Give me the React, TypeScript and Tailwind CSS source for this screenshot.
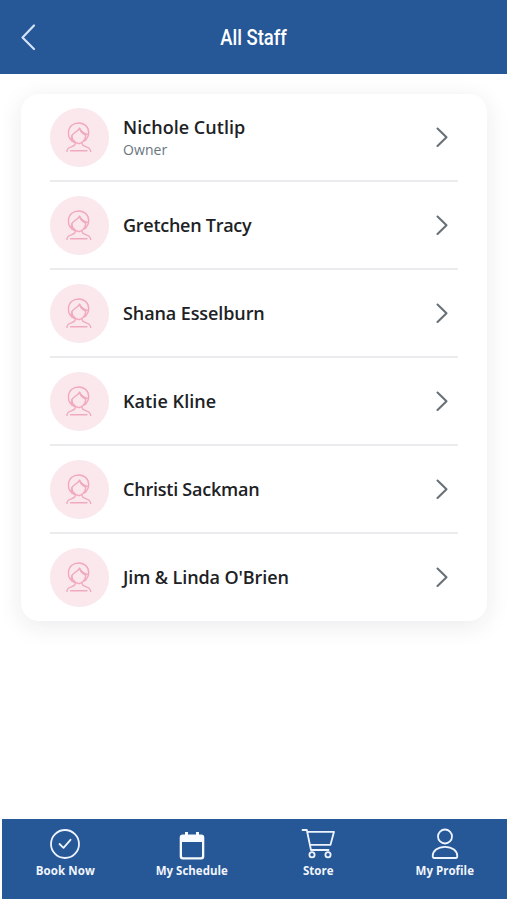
type Staff = { name: string; role?: string; tracking: string };

const staff: Staff[] = [
  { name: "Nichole Cutlip", role: "Owner", tracking: "tracking-[0.04px]" },
  { name: "Gretchen Tracy", tracking: "tracking-[-0.27px]" },
  { name: "Shana Esselburn", tracking: "tracking-[-0.1px]" },
  { name: "Katie Kline", tracking: "tracking-[0.08px]" },
  { name: "Christi Sackman", tracking: "tracking-[-0.23px]" },
  { name: "Jim & Linda O'Brien", tracking: "tracking-[-0.11px]" },
];

function Avatar() {
  return (
    <div className="flex h-[59px] w-[59px] shrink-0 items-center justify-center rounded-full bg-[#fae8ed] pr-px">
      <svg width="26" height="30" viewBox="0 0 26 30" fill="none" stroke="#f0a9be" strokeWidth="1.400" strokeLinecap="round" strokeLinejoin="round">
        <path d="M8.500 20.500C4 18.500 2.200 15 2.400 10.500 2.700 4.500 7 1 12.700 1c6 0 10 4 10 9.800 0 3.400-1.500 6-4.200 8.200" />
        <path d="M13.500 6.300C11.500 9.800 7 10.800 5.800 13.800c0 3 1.300 4.700 3.200 6l2.800 1.700h2l2.800-1.700c1.900-1.400 3-3.400 3.200-6.400C17 12 14.500 9.800 13.500 6.300Z" />
        <path d="M13.500 6.300c1.800 3.400 4.800 5.300 8.600 6.200M5.800 13.800c-.8 1.700-.6 3.500.2 5" />
        <path d="M9.500 21.300 8.800 23C7 24.600 4.500 24.800 2.700 26 1.500 26.900 1 28 .8 29.400M16 21.300l.7 1.700c1.800 1.600 4.300 1.800 6.100 3 1.200.9 1.700 2 1.900 3.400M4.500 28.700h16.500" />
      </svg>
    </div>
  );
}

function Chevron({ left = false }: { left?: boolean }) {
  return left ? (
    <svg width="16" height="28" viewBox="0 0 16 28" fill="none" stroke="#d3e2f8" strokeWidth="2.200" strokeLinecap="round" strokeLinejoin="round">
      <path d="M14 2.500 2.500 14.500 14 26" />
    </svg>
  ) : (
    <svg width="14" height="22" viewBox="0 0 14 22" fill="none" stroke="#687177" strokeWidth="2.100" strokeLinecap="round" strokeLinejoin="round">
      <path d="m2.500 2.500 9 8.700-9 8.800" />
    </svg>
  );
}

function BookIcon() {
  return (
    <svg width="32" height="32" viewBox="0 0 32 32" fill="none" stroke="#eef4ff" strokeWidth="1.800" strokeLinecap="round" strokeLinejoin="round">
      <circle cx="16" cy="16" r="14" />
      <path d="m10.500 16 4 3.800 7-8" />
    </svg>
  );
}

function ScheduleIcon() {
  return (
    <svg width="32" height="32" viewBox="0 0 32 32" fill="#f7faff">
      <path fillRule="evenodd" d="M9 4h3v2.500h8V4h3v2.500h2.300a3 3 0 0 1 3 3v19a3 3 0 0 1-3 3H6.700a3 3 0 0 1-3-3v-19a3 3 0 0 1 3-3H9V4ZM6 14v13.700c0 1 .6 1.600 1.600 1.600h16.800c1 0 1.600-.6 1.600-1.600V14H6Z" />
    </svg>
  );
}

function StoreIcon() {
  return (
    <svg width="36" height="32" viewBox="0 0 36 32" fill="none" stroke="#eef4ff" strokeWidth="1.800" strokeLinecap="round" strokeLinejoin="round">
      <path d="M2.500 2h4.300l4.200 20h17.500M7.500 3.800H34L30.500 16.800H10" />
      <circle cx="12" cy="26.700" r="2.600" />
      <circle cx="28" cy="26.700" r="2.600" />
    </svg>
  );
}

function ProfileIcon() {
  return (
    <svg width="32" height="32" viewBox="0 0 32 32" fill="none" stroke="#eef4ff" strokeWidth="1.800" strokeLinecap="round" strokeLinejoin="round">
      <circle cx="16" cy="8.500" r="7" />
      <path d="M3.700 28C3.700 23 8.500 18.800 16 18.800S28.300 23 28.300 28c0 1.400-.4 2-1.500 2H5.200c-1.100 0-1.500-.6-1.500-2Z" />
    </svg>
  );
}

const tabs = [
  { label: "Book Now", icon: <BookIcon />, tracking: "tracking-[0.1px]" },
  { label: "My Schedule", icon: <ScheduleIcon />, tracking: "tracking-[0px]" },
  { label: "Store", icon: <StoreIcon />, tracking: "tracking-[0px]" },
  { label: "My Profile", icon: <ProfileIcon />, tracking: "tracking-[0.02px]" },
];

export default function App() {
  return (
    <div className="flex h-[900px] w-[507px] flex-col overflow-hidden bg-white font-['Open_Sans',sans-serif]">
      <header className="grid h-[74px] shrink-0 grid-cols-[60px_1fr_60px] items-center bg-[#265797]">
        <button className="flex pl-5" aria-label="Back">
          <Chevron left />
        </button>
        <h1 className="scale-x-[0.84] pt-0.5 text-center font-['Roboto',sans-serif] text-[22px] leading-7 font-medium text-white">All Staff</h1>
      </header>

      <main className="flex-1 pt-5 pr-5 pl-[21px]">
        <ul className="h-[527px] rounded-[18px] bg-white px-[29px] shadow-[0_5px_24px_rgba(30,35,60,0.09)]">
          {staff.map((s) => (
            <li key={s.name} className="flex h-[88px] items-center border-b-2 border-[#ebebed] last:h-[86px] last:border-0">
              <Avatar />
              <div className="ml-[14px] flex-1">
                <p className={`text-[18px] leading-6 font-semibold whitespace-nowrap text-[#202124] ${s.tracking}`}>{s.name}</p>
                {s.role && <p className="-mb-px pt-px text-[14px] leading-5 tracking-[0.1px] text-[#69757e]">{s.role}</p>}
              </div>
              <div className="mr-[9px]">
                <Chevron />
              </div>
            </li>
          ))}
        </ul>
      </main>

      <nav className="mb-px ml-[2px] grid h-[80px] w-[506px] shrink-0 grid-cols-4 bg-[#265797]">
        {tabs.map((t) => (
          <a key={t.label} className="flex flex-col items-center pt-[9px]">
            {t.icon}
            <span className={`mt-[3px] text-[11.5px] leading-4 font-bold whitespace-nowrap text-[#f1f5fd] ${t.tracking}`}>{t.label}</span>
          </a>
        ))}
      </nav>
    </div>
  );
}
